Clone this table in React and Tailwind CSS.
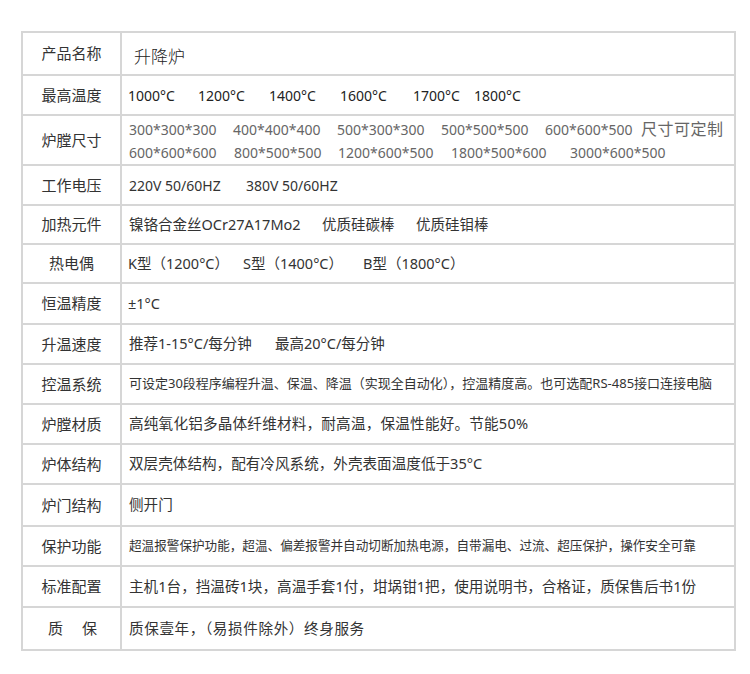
const rows = [
  { label: '产品名称', h: 'h-[43px]', value: <span className="text-[17px] font-light text-[#222] pl-[5px] pt-[6px]">升降炉</span> },
  {
    label: '最高温度',
    h: 'h-[40px]',
    value: (
      <div className="flex text-[14px] text-[#222] -ml-[1px]">
        <span className="w-[70px]">1000°C</span>
        <span className="w-[71px]">1200°C</span>
        <span className="w-[71px]">1400°C</span>
        <span className="w-[73px]">1600°C</span>
        <span className="w-[61px]">1700°C</span>
        <span>1800°C</span>
      </div>
    ),
  },
  {
    label: '炉膛尺寸',
    h: 'h-[50px]',
    value: (
      <div className="flex flex-col text-[14px] text-[#666] leading-[23px] pt-[1px]">
        <div className="flex items-center">
          <span className="w-[104px]">300*300*300</span>
          <span className="w-[104px]">400*400*400</span>
          <span className="w-[104px]">500*300*300</span>
          <span className="w-[104px]">500*500*500</span>
          <span className="w-[96px]">600*600*500</span>
          <span className="text-[16px] tracking-[0.5px]">尺寸可定制</span>
        </div>
        <div className="flex">
          <span className="w-[105px]">600*600*600</span>
          <span className="w-[104px]">800*500*500</span>
          <span className="w-[113px]">1200*600*500</span>
          <span className="w-[119px]">1800*500*600</span>
          <span>3000*600*500</span>
        </div>
      </div>
    ),
  },
  {
    label: '工作电压',
    h: 'h-[40px]',
    value: (
      <div className="flex text-[14px] text-[#333]">
        <span className="w-[117px]">220V 50/60HZ</span>
        <span>380V 50/60HZ</span>
      </div>
    ),
  },
  {
    label: '加热元件',
    h: 'h-[39px]',
    value: (
      <div className="flex text-[14.5px] text-[#333]">
        <span className="w-[193px]">镍铬合金丝OCr27A17Mo2</span>
        <span className="w-[94px]">优质硅碳棒</span>
        <span>优质硅钼棒</span>
      </div>
    ),
  },
  {
    label: '热电偶',
    h: 'h-[39px]',
    value: (
      <div className="flex text-[14.5px] text-[#333] -ml-[1px]">
        <span className="w-[115px]">K型（1200°C）</span>
        <span className="w-[120px]">S型（1400°C）</span>
        <span>B型（1800°C）</span>
      </div>
    ),
  },
  { label: '恒温精度', h: 'h-[41px]', value: <span className="text-[14.5px] text-[#333] -ml-[1px]">±1°C</span> },
  {
    label: '升温速度',
    h: 'h-[40px]',
    value: (
      <div className="flex text-[14.5px] text-[#333]">
        <span className="w-[146px]">推荐1-15°C/每分钟</span>
        <span>最高20°C/每分钟</span>
      </div>
    ),
  },
  {
    label: '控温系统',
    h: 'h-[40px]',
    value: (
      <span className="text-[13px] text-[#333]">
        可设定30段程序编程升温、保温、降温（实现全自动化），控温精度高。也可选配RS-485接口连接电脑
      </span>
    ),
  },
  { label: '炉膛材质', h: 'h-[40px]', value: <span className="text-[14.6px] text-[#333] tracking-[0.2px]">高纯氧化铝多晶体纤维材料，耐高温，保温性能好。节能50%</span> },
  { label: '炉体结构', h: 'h-[40px]', value: <span className="text-[14.6px] text-[#333]">双层壳体结构，配有冷风系统，外壳表面温度低于35°C</span> },
  { label: '炉门结构', h: 'h-[42px]', value: <span className="text-[14.6px] text-[#333]">侧开门</span> },
  {
    label: '保护功能',
    h: 'h-[40px]',
    value: (
      <span className="text-[12.6px] text-[#333]">
        超温报警保护功能，超温、偏差报警并自动切断加热电源，自带漏电、过流、超压保护，操作安全可靠
      </span>
    ),
  },
  {
    label: '标准配置',
    h: 'h-[41px]',
    value: <span className="text-[14.6px] text-[#333]">主机1台，挡温砖1块，高温手套1付，坩埚钳1把，使用说明书，合格证，质保售后书1份</span>,
  },
  { label: '质　保', h: 'h-[41px]', spaced: true, value: <span className="text-[14.6px] text-[#333] tracking-[0.6px]">质保壹年，（易损件除外）终身服务</span> },
];

export default function App() {
  return (
    <div className="w-[750px] h-[674px] bg-white pt-[31px] pl-[21px] font-['Noto_Sans','Noto_Sans_CJK_SC',sans-serif]">
      <div className="w-[715px] border-2 border-[#d6d6d6]">
        {rows.map((row, i) => (
          <div
            key={row.label}
            className={`flex ${row.h} ${i < rows.length - 1 ? 'border-b-2 border-[#d6d6d6]' : ''}`}
          >
            <div className="w-[99px] shrink-0 border-r-2 border-[#d6d6d6] flex items-center justify-center text-[15px] text-[#333]">
              {row.spaced ? <span className="tracking-[2px] pl-[4px]">{row.label}</span> : row.label}
            </div>
            <div className="flex-1 flex items-center pl-[7px] whitespace-nowrap">{row.value}</div>
          </div>
        ))}
      </div>
    </div>
  );
}
